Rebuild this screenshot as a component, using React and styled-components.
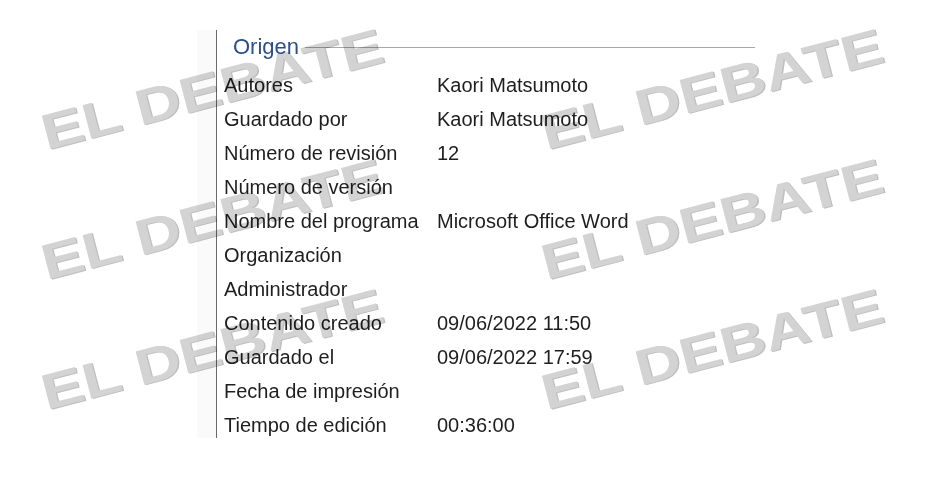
import React from "react";
import styled, { createGlobalStyle } from "styled-components";

const GlobalStyle = createGlobalStyle`
	html, body {
		margin: 0;
		padding: 0;
		background: #ffffff;
	}
	body {
		font-family: "Liberation Sans", Arial, sans-serif;
		color: #1e1e1e;
	}
`;

const Page = styled.div`
	position: relative;
	width: 940px;
	height: 478px;
	overflow: hidden;
	padding: 30px 0 0 197px;
	box-sizing: border-box;
	display: flex;
	align-items: flex-start;
`;

const Gutter = styled.div`
	width: 19px;
	height: 408px;
	background: #fafafa;
`;

const Panel = styled.section`
	width: 538px;
	height: 408px;
	border-left: 1px solid #6a6a6a;
	display: flex;
	flex-direction: column;
`;

const Header = styled.div`
	display: flex;
	align-items: center;
	height: 30px;
	margin-top: 2px;
	margin-bottom: 6px;
	padding-left: 16px;
	gap: 6px;
`;

const Title = styled.h2`
	margin: 0;
	font-weight: 400;
	font-size: 22px;
	line-height: 30px;
	color: #2c4f8c;
`;

const Rule = styled.div`
	flex: 1;
	height: 1px;
	background: #a9a9a9;
	margin-top: 1px;
`;

const Rows = styled.div`
	display: flex;
	flex-direction: column;
	padding-left: 7px;
`;

const Row = styled.div`
	display: grid;
	grid-template-columns: 213px 1fr;
	height: 34px;
	line-height: 34px;
	font-size: 20px;
	white-space: nowrap;
`;

const Label = styled.span``;
const Value = styled.span``;

const Watermark = styled.div`
	position: absolute;
	left: ${(p) => p.x}px;
	top: ${(p) => p.y - 44}px;
	font-family: "Liberation Sans", Arial, sans-serif;
	font-weight: 700;
	font-size: 50px;
	line-height: 50px;
	white-space: nowrap;
	color: #d3d3d3;
	text-shadow: 1px 1px 0 #bfbfbf;
	mix-blend-mode: multiply;
	transform-origin: 0 44px;
	transform: rotate(-14.6deg) scaleX(1.26);
	pointer-events: none;
`;

const properties = [
	["Autores", "Kaori Matsumoto"],
	["Guardado por", "Kaori Matsumoto"],
	["Número de revisión", "12"],
	["Número de versión", ""],
	["Nombre del programa", "Microsoft Office Word"],
	["Organización", ""],
	["Administrador", ""],
	["Contenido creado", "09/06/2022 11:50"],
	["Guardado el", "09/06/2022 17:59"],
	["Fecha de impresión", ""],
	["Tiempo de edición", "00:36:00"],
];

const marks = [
	[47, 152],
	[47, 282],
	[47, 412],
	[547, 152],
	[547, 282],
	[547, 412],
];

const App = () => {
	return (
		<>
			<GlobalStyle />
			<Page>
				<Gutter />
				<Panel>
					<Header>
						<Title>Origen</Title>
						<Rule />
					</Header>
					<Rows>
						{properties.map(([label, value]) => (
							<Row key={label}>
								<Label>{label}</Label>
								<Value>{value}</Value>
							</Row>
						))}
					</Rows>
				</Panel>
				{marks.map(([x, y]) => (
					<Watermark key={`${x}-${y}`} x={x} y={y}>
						EL DEBATE
					</Watermark>
				))}
			</Page>
		</>
	);
};

export default App;
